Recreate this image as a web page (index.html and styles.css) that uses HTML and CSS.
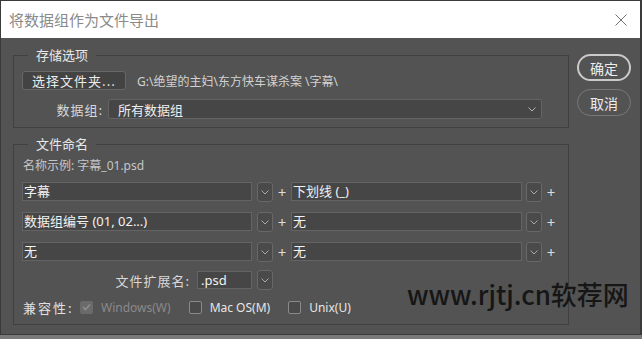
FILE: index.html
```html
<!DOCTYPE html>
<html lang="zh-CN">
<head>
	<meta charset="UTF-8">
	<title>将数据组作为文件导出</title>
	<link rel="stylesheet" href="styles.css">
</head>
<body>
	<div class="dialog">
		<div class="titlebar">
			<span class="title">将数据组作为文件导出</span>
			<svg class="close" width="12" height="12" viewBox="0 0 12 12">
				<path d="M0.5 0.5 L11.5 11.5 M11.5 0.5 L0.5 11.5" stroke="#707070" stroke-width="1" fill="none"/>
			</svg>
		</div>

		<div class="content">
			<div class="main">
				<!-- 存储选项 -->
				<fieldset class="group group-store">
					<legend>存储选项</legend>
					<div class="row-folder">
						<button class="btn-folder">选择文件夹...</button>
						<span class="path">G:\绝望的主妇\东方快车谋杀案 \字幕\</span>
					</div>
					<div class="row-set">
						<span class="set-label">数据组:</span>
						<div class="select">
							<span>所有数据组</span>
							<svg class="chev" width="8" height="5" viewBox="0 0 8 5"><path d="M0.5 0.5 L4 4 L7.5 0.5" stroke="#b4b4b4" fill="none"/></svg>
						</div>
					</div>
				</fieldset>

				<!-- 文件命名 -->
				<fieldset class="group group-name">
					<legend>文件命名</legend>
					<div class="example">名称示例: 字幕_01.psd</div>

					<div class="name-row">
						<div class="field field-a">字幕</div>
						<div class="drop"><svg width="8" height="5" viewBox="0 0 8 5"><path d="M0.5 0.5 L4 4 L7.5 0.5" stroke="#a8a8a8" fill="none"/></svg></div>
						<span class="plus">+</span>
						<div class="field field-b">下划线 (_)</div>
						<div class="drop drop-b"><svg width="8" height="5" viewBox="0 0 8 5"><path d="M0.5 0.5 L4 4 L7.5 0.5" stroke="#a8a8a8" fill="none"/></svg></div>
						<span class="plus">+</span>
					</div>

					<div class="name-row">
						<div class="field field-a">数据组编号 (01, 02...)</div>
						<div class="drop"><svg width="8" height="5" viewBox="0 0 8 5"><path d="M0.5 0.5 L4 4 L7.5 0.5" stroke="#a8a8a8" fill="none"/></svg></div>
						<span class="plus">+</span>
						<div class="field field-b">无</div>
						<div class="drop drop-b"><svg width="8" height="5" viewBox="0 0 8 5"><path d="M0.5 0.5 L4 4 L7.5 0.5" stroke="#a8a8a8" fill="none"/></svg></div>
						<span class="plus">+</span>
					</div>

					<div class="name-row">
						<div class="field field-a">无</div>
						<div class="drop"><svg width="8" height="5" viewBox="0 0 8 5"><path d="M0.5 0.5 L4 4 L7.5 0.5" stroke="#a8a8a8" fill="none"/></svg></div>
						<span class="plus">+</span>
						<div class="field field-b">无</div>
						<div class="drop drop-b"><svg width="8" height="5" viewBox="0 0 8 5"><path d="M0.5 0.5 L4 4 L7.5 0.5" stroke="#a8a8a8" fill="none"/></svg></div>
						<span class="plus">+</span>
					</div>

					<div class="ext-row">
						<span class="ext-label">文件扩展名:</span>
						<div class="field field-ext">.psd</div>
						<div class="drop"><svg width="8" height="5" viewBox="0 0 8 5"><path d="M0.5 0.5 L4 4 L7.5 0.5" stroke="#a8a8a8" fill="none"/></svg></div>
					</div>

					<div class="compat-row">
						<span class="compat-label">兼容性:</span>
						<span class="check check-on"><svg width="9" height="8" viewBox="0 0 9 8"><path d="M1 4 L3.5 6.5 L8 1.5" stroke="#8e8e8e" stroke-width="1.6" fill="none"/></svg></span>
						<span class="check-text disabled">Windows(W)</span>
						<span class="check"></span>
						<span class="check-text">Mac OS(M)</span>
						<span class="check"></span>
						<span class="check-text">Unix(U)</span>
					</div>
				</fieldset>
			</div>

			<div class="side">
				<button class="btn-round btn-ok">确定</button>
				<button class="btn-round">取消</button>
			</div>
		</div>

		<div class="watermark">www.rjtj.cn软荐网</div>
	</div>
</body>
</html>
```

FILE: styles.css
```css
* {
	margin  : 0;
	padding : 0;
	box-sizing: border-box;
}
html, body {
	width  : 642px;
	height : 339px;
	overflow: hidden;
	background-color: #7a7a7a;
}
body {
	font-family: "Noto Sans", "Noto Sans CJK SC", sans-serif;
	font-size: 13px;
	color: #e4e4e4;
}

.dialog {
	position: relative;
	width  : 642px;
	height : 335px;
	background-color: #535353;
	border-top   : 1px solid #3a3a3a;
	border-left  : 1px solid #3a3a3a;
	border-right : 2px solid #3a3a3a;
	border-bottom: 1px solid #3a3a3a;
}

/* タイトルバー */
.titlebar {
	display: flex;
	align-items: center;
	justify-content: space-between;
	height : 37px;
	padding: 0 13px 0 8px;
	background-color: #ffffff;
}
.title {
	font-family: "Noto Sans CJK SC", sans-serif;
	font-size: 15px;
	color: #8a8a8a;
}

.content {
	display: flex;
	padding: 8px 0 0 12px;
}
.main {
	width: 556px;
}
.side {
	display: flex;
	flex-direction: column;
	gap: 8px;
	margin-left: 8px;
	padding-top: 8px;
}

/* グループ */
.group {
	border : 1px solid #404040;
	padding: 0 8px 8px 8px;
}
.group legend {
	margin-left: 6px;
	padding: 0 8px;
	line-height: 18px;
	font-family: "Noto Sans CJK SC", sans-serif;
	font-size: 13px;
	color: #e8e8e8;
}
.group-store {
	padding-top: 7px;
}
.group-name {
	margin-top : 7px;
	padding-top: 5px;
}

.row-folder {
	display: flex;
	align-items: center;
	height: 19px;
}
.btn-folder {
	width : 104px;
	height: 19px;
	background-color: #434343;
	border: 1px solid #676767;
	border-radius: 3px;
	font-family: "Noto Sans CJK SC", sans-serif;
	font-size: 13px;
	letter-spacing: 1px;
	color: #ececec;
	line-height: 17px;
}
.path {
	margin-left: 11px;
	font-family: "Noto Sans", "Noto Sans CJK SC", sans-serif;
	font-size: 12px;
	color: #d2d2d2;
}

.row-set {
	display: flex;
	align-items: center;
	height: 20px;
	margin-top: 9px;
}
.set-label {
	width: 81px;
	text-align: right;
	font-family: "Noto Sans CJK SC", sans-serif;
	color: #d8d8d8;
	letter-spacing: 1px;
}
.select {
	display: flex;
	align-items: center;
	justify-content: space-between;
	width : 434px;
	height: 20px;
	margin-left: 5px;
	padding: 0 5px 0 9px;
	background-color: #464646;
	border: 1px solid #646464;
	border-radius: 3px;
	font-family: "Noto Sans CJK SC", sans-serif;
	color: #eeeeee;
}

.example {
	line-height: 16px;
	padding-left: 1px;
	font-size: 12px;
	color: #c6c6c6;
}

/* 名前の行 */
.name-row {
	display: flex;
	align-items: flex-start;
	height: 20px;
	margin-top: 10px;
}
.example + .name-row {
	margin-top: 8px;
}
.field {
	height: 19px;
	padding-left: 1px;
	background-color: #464646;
	border: 1px solid #646464;
	line-height: 17px;
	color: #f2f2f2;
	white-space: nowrap;
}
.field-a {
	width: 230px;
}
.field-b {
	width: 231px;
}
.drop {
	display: flex;
	align-items: center;
	justify-content: center;
	width : 16px;
	height: 20px;
	margin-left: 5px;
	background-color: #4a4a4a;
	border: 1px solid #686868;
	border-radius: 3px;
}
.drop-b {
	margin-left: 4px;
}
.plus {
	width: 18px;
	text-align: center;
	line-height: 20px;
	font-size: 15px;
	color: #dcdcdc;
}

.ext-row {
	display: flex;
	align-items: center;
	height: 20px;
	margin-top: 8px;
}
.ext-label {
	width: 168px;
	text-align: right;
	font-family: "Noto Sans CJK SC", sans-serif;
	letter-spacing: 1px;
	color: #d8d8d8;
}
.field-ext {
	width : 55px;
	height: 18px;
	margin-left: 7px;
	padding-left: 3px;
	line-height: 16px;
}

/* 互換性 */
.compat-row {
	display: flex;
	align-items: center;
	height: 18px;
	margin-top: 8px;
	padding-left: 1px;
}
.compat-label {
	width: 57px;
	font-family: "Noto Sans CJK SC", sans-serif;
	letter-spacing: 2px;
	color: #e0e0e0;
}
.check {
	display: flex;
	align-items: center;
	justify-content: center;
	width : 13px;
	height: 13px;
	background-color: #4a4a4a;
	border: 1px solid #8a8a8a;
	border-radius: 2px;
}
.check-on {
	background-color: #6a6a6a;
	border-color: #6a6a6a;
}
.check-text {
	margin-left : 8px;
	margin-right: 18px;
	font-size: 12px;
	color: #e6e6e6;
}
.check-text.disabled {
	color: #8a8a8a;
}

/* OK / キャンセル */
.btn-round {
	width : 54px;
	height: 27px;
	background-color: #535353;
	border: 1px solid #7a7a7a;
	border-radius: 14px;
	font-family: "Noto Sans CJK SC", sans-serif;
	font-size: 14px;
	color: #ececec;
}
.btn-ok {
	border: 2px solid #cacaca;
}

.watermark {
	position: absolute;
	left: 406px;
	top : 277px;
	font-family: "Noto Sans CJK SC", sans-serif;
	font-size: 26px;
	font-weight: 500;
	line-height: 32px;
	color: #161616;
	white-space: nowrap;
}
```
